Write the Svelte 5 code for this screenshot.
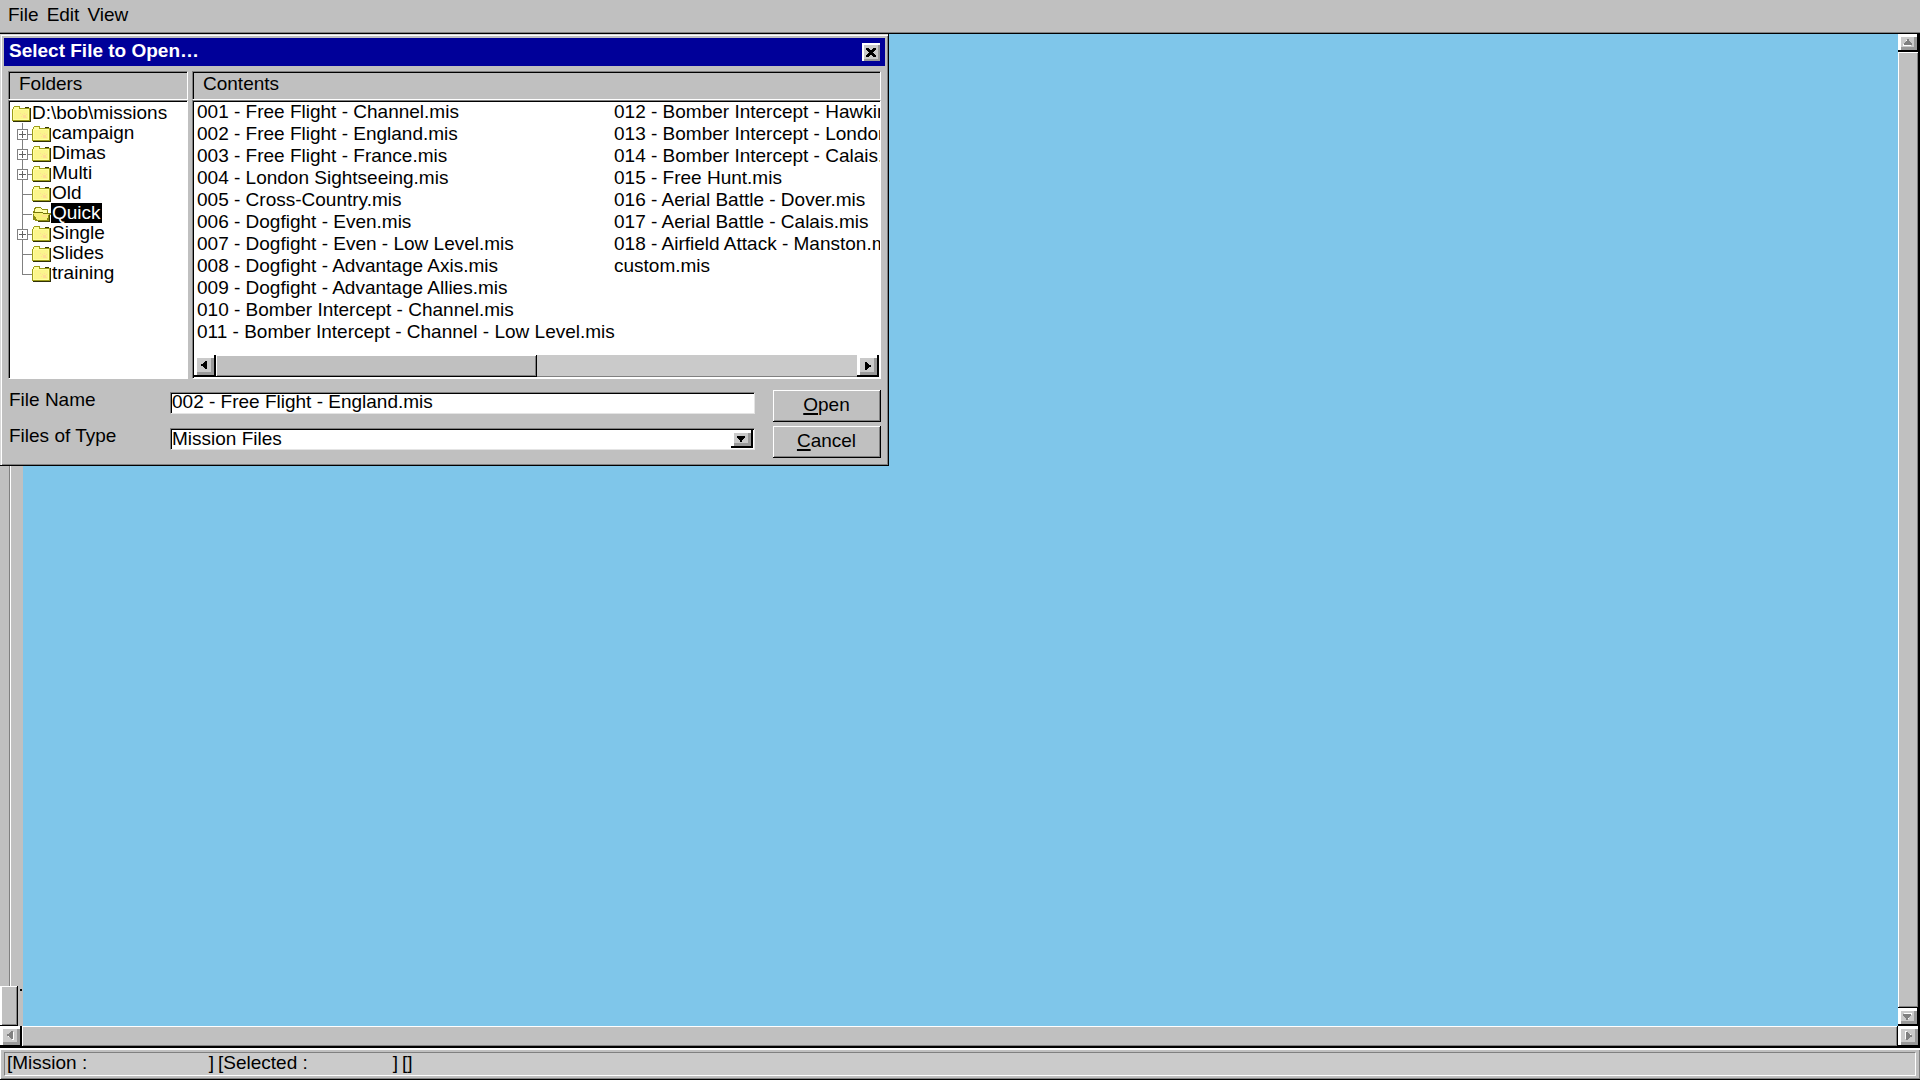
<script lang="ts">
type Folder = {
	name: string;
	expandable?: boolean;
};

const menus = ["File", "Edit", "View"];

const root = "D:\\bob\\missions";

const folders: Folder[] = [
	{ name: "campaign", expandable: true },
	{ name: "Dimas", expandable: true },
	{ name: "Multi", expandable: true },
	{ name: "Old" },
	{ name: "Quick" },
	{ name: "Single", expandable: true },
	{ name: "Slides" },
	{ name: "training" },
];

const files = [
	"001 - Free Flight - Channel.mis",
	"002 - Free Flight - England.mis",
	"003 - Free Flight - France.mis",
	"004 - London Sightseeing.mis",
	"005 - Cross-Country.mis",
	"006 - Dogfight - Even.mis",
	"007 - Dogfight - Even - Low Level.mis",
	"008 - Dogfight - Advantage Axis.mis",
	"009 - Dogfight - Advantage Allies.mis",
	"010 - Bomber Intercept - Channel.mis",
	"011 - Bomber Intercept - Channel - Low Level.mis",
	"012 - Bomber Intercept - Hawkinge.mis",
	"013 - Bomber Intercept - London.mis",
	"014 - Bomber Intercept - Calais.mis",
	"015 - Free Hunt.mis",
	"016 - Aerial Battle - Dover.mis",
	"017 - Aerial Battle - Calais.mis",
	"018 - Airfield Attack - Manston.mis",
	"custom.mis",
];

let selectedFolder = $state("Quick");
let fileName = $state(files[1]);
let fileType = $state("Mission Files");
let zoom = $state(0);
let open = $state(true);
</script>

{#snippet arrow(direction: string)}
	<svg class="arrow arrow--{direction}" width="9" height="9" viewBox="0 0 9 9" shape-rendering="crispEdges" aria-hidden="true">
		<path d="M7 0v8H5V7H4V6H3V5H1V3h2V2h1V1h1V0z" fill="currentColor" />
	</svg>
{/snippet}

{#snippet folderIcon(opened: boolean)}
	<svg class="folder" width="19" height="16" viewBox="0 0 19 16" shape-rendering="crispEdges" aria-hidden="true">
		{#if opened}
			<path d="M1 14V5l1-1V2l1-1h5l2 2h6v4h3l-2 8H4z" fill="#8c8c10" />
			<path d="M3 6V3l1-1h4l2 2h5v3H6L4 9z" fill="#ffffa8" />
			<path d="M1 7h10l2 1h4l-2 6H5z" fill="#f6f078" />
			<path d="M1 6h9l2 1h5v1h-5l-2-1H1z" fill="#75750a" />
			<path d="M10 9h5v2h-5z" fill="#ffe08a" />
			<path d="M5 15h12V9h1v7H6z" fill="#44440a" />
		{:else}
			<path d="M0 3l1-1V1l1-1h5l1 1v1h10v13H0z" fill="#9c9c18" />
			<path d="M1 3h1V1h5v2h10v11H1z" fill="#ffffa0" />
			<path d="M2 4h14v9H2z" fill="#fbf58c" />
			<path d="M8 7h1v1H8zM10 8h1v1h-1zM12 7h1v1h-1zM14 8h1v1h-1zM9 10h1v1H9zM11 9h3v3h-3zM14 11h1v1h-1z" fill="#ffdc96" />
			<path d="M8 1h9v1h1v13H1v1h18V2h-1z" fill="#303008" />
		{/if}
	</svg>
{/snippet}

<div class="app">
	<nav class="menubar" aria-label="Main">
		{#each menus as menu}
			<button type="button">{menu}</button>
		{/each}
	</nav>

	<main class="workspace">
		<div class="zoom">
			<input type="range" aria-label="Zoom" min="0" max="10" bind:value={zoom} />
		</div>
		<div class="map"></div>
		<div class="scroll scroll--vertical scroll--disabled">
			<button type="button" aria-label="Scroll up">{@render arrow("up")}</button>
			<div class="thumb"></div>
			<button type="button" aria-label="Scroll down">{@render arrow("down")}</button>
		</div>

		{#if open}
			<div class="dialog" role="dialog" aria-labelledby="dialog-title">
				<header class="titlebar">
					<h1 id="dialog-title">Select File to Open…</h1>
					<button class="close" type="button" aria-label="Close" onclick={() => (open = false)}>
						<svg width="10" height="9" viewBox="0 0 10 9" shape-rendering="crispEdges" aria-hidden="true">
							<path d="M0 0h3v1h1v1h2V1h1V0h3v2H9v1H8v1H7v1h1v1h1v1h1v2H7V8H6V7H4v1H3v1H0V7h1V6h1V5h1V4H2V3H1V2H0z" />
						</svg>
					</button>
				</header>

				<div class="panes">
					<section class="pane">
						<h2>Folders</h2>
						<div class="box tree">
							<div class="node">
								{@render folderIcon(false)}
								<span class="label">{root}</span>
							</div>
							{#each folders as folder, index (folder.name)}
								<button class="node" type="button" onclick={() => (selectedFolder = folder.name)}>
									<svg width="20" height="20" viewBox="0 0 20 20" shape-rendering="crispEdges" aria-hidden="true">
										<path d={index === folders.length - 1 ? "M10 0h1v12h-1z" : "M10 0h1v20h-1z"} fill="#808080" />
										<path d="M10 11h10v1H10z" fill="#808080" />
										{#if folder.expandable}
											<path d="M5 6h11v11H5z" fill="#808080" />
											<path d="M6 7h9v9H6z" fill="#fff" />
											<path d="M7 11h7v1H7zM10 8h1v7h-1z" fill="#606060" />
										{/if}
									</svg>
									{@render folderIcon(folder.name === selectedFolder)}
									<span class="label" class:label--selected={folder.name === selectedFolder}>{folder.name}</span>
								</button>
							{/each}
						</div>
					</section>

					<section class="pane">
						<h2>Contents</h2>
						<div class="box contents">
							<ul>
								{#each files as file (file)}
									<li><button type="button" onclick={() => (fileName = file)}>{file}</button></li>
								{/each}
							</ul>
							<div class="scroll scroll--list">
								<button type="button" aria-label="Scroll left">{@render arrow("left")}</button>
								<div class="track"><div class="thumb"></div></div>
								<button type="button" aria-label="Scroll right">{@render arrow("right")}</button>
							</div>
						</div>
					</section>
				</div>

				<form class="fields" onsubmit={(event) => event.preventDefault()}>
					<label for="file-name">File Name</label>
					<input id="file-name" type="text" bind:value={fileName} />
					<button class="action" type="submit"><u>O</u>pen</button>

					<label for="file-type">Files of Type</label>
					<div class="combo">
						<select id="file-type" bind:value={fileType}>
							<option>Mission Files</option>
						</select>
						<span class="combo-arrow">{@render arrow("down")}</span>
					</div>
					<button class="action" type="button" onclick={() => (open = false)}><u>C</u>ancel</button>
				</form>
			</div>
		{/if}
	</main>

	<div class="scroll scroll--disabled scroll--page">
		<button type="button" aria-label="Scroll left">{@render arrow("left")}</button>
		<div class="thumb"></div>
		<button type="button" aria-label="Scroll right">{@render arrow("right")}</button>
	</div>

	<footer class="status">
		<div class="status-line">
			<span class="status-item status-item--mission"><span>[Mission :</span><span>]</span></span>
			<span class="status-item status-item--selected"><span>[Selected :</span><span>]</span></span>
			<span>[]</span>
		</div>
	</footer>
</div>

<style>
	:global(body) {
		background: #c0c0c0;
	}

	.app {
		--face: #c0c0c0;
		--shade: #808080;
		display: flex;
		flex-direction: column;
		min-height: 100vh;
		background: var(--face);
		color: #000;
		font: 19px/20px "Liberation Sans", Arial, sans-serif;
	}

	.app :global(*) {
		box-sizing: border-box;
	}

	button,
	input,
	select {
		margin: 0;
		padding: 0;
		border: 0;
		border-radius: 0;
		background: none;
		color: inherit;
		font: inherit;
	}

	svg {
		display: block;
		flex: none;
	}

	.menubar {
		display: flex;
		gap: 8px;
		height: 34px;
		padding: 4px 8px 8px;
		border-bottom: 1px solid #000;
		box-shadow: inset 0 -1px var(--shade);
	}

	.workspace {
		position: relative;
		display: flex;
		flex: 1;
	}

	.map {
		flex: 1;
		background: #7fc6ea;
	}

	.zoom {
		display: flex;
		width: 23px;
	}

	.zoom::after {
		align-self: flex-end;
		width: 2px;
		height: 2px;
		margin: 0 0 35px 2px;
		background: #000;
		content: "";
	}

	.zoom input {
		width: 18px;
		background: linear-gradient(to right, transparent 9px, var(--shade) 9px 10px, #fff 10px 11px, transparent 11px);
		appearance: none;
		direction: rtl;
		writing-mode: vertical-lr;
	}

	.zoom input::-webkit-slider-thumb {
		width: 18px;
		height: 40px;
		border: 1px solid #000;
		border-width: 0 1px 1px 0;
		border-radius: 0;
		background: var(--face);
		box-shadow: inset 2px 1px #fff, inset -1px -1px var(--shade);
		appearance: none;
	}

	.arrow--right {
		transform: rotate(180deg);
	}

	.arrow--up {
		transform: rotate(90deg);
	}

	.arrow--down {
		transform: rotate(-90deg);
	}

	.scroll {
		display: flex;
	}

	.scroll button,
	.combo-arrow {
		display: flex;
		flex: none;
		align-items: center;
		justify-content: center;
		border: solid #000;
		border-width: 0 2px 2px 0;
		background: #cacaca;
		box-shadow: inset 3px 3px #fff, inset -3px -3px #999;
	}

	.scroll .thumb {
		border: solid #000;
		border-width: 0 1px 1px 0;
		background: var(--face);
		box-shadow: inset 1px 1px #fff, inset -1px -1px var(--shade);
	}

	.scroll--disabled button {
		color: var(--shade);
	}

	.scroll--disabled .arrow {
		filter: drop-shadow(1px 1px #fff);
	}

	.scroll--disabled .thumb {
		flex: 1;
	}

	.scroll--vertical {
		flex-direction: column;
		width: 22px;
		border-right: 1px solid #000;
	}

	.scroll--vertical button {
		height: 18px;
	}

	.scroll--page {
		height: 22px;
		border-bottom: 1px solid #000;
	}

	.scroll--page button {
		width: 22px;
	}

	.status {
		padding: 4px 4px 3px;
		border-bottom: 1px solid #000;
		background: var(--face);
		box-shadow: inset 1px 2px #fff, inset -1px -1px var(--shade);
	}

	.status-line {
		display: flex;
		gap: 4px;
		height: 24px;
		padding-left: 2px;
		border: 1px solid #fff;
		border-top-color: var(--shade);
		border-left-color: var(--shade);
		background: #cbcbcb;
	}

	.status-item {
		display: flex;
		justify-content: space-between;
	}

	.status-item--mission {
		width: 207px;
	}

	.status-item--selected {
		width: 180px;
	}

	.dialog {
		position: absolute;
		top: 0;
		left: 0;
		width: min(889px, 100%);
		padding: 4px 3px 7px 4px;
		border: solid #000;
		border-width: 0 1px 1px 0;
		background: var(--face);
		box-shadow: inset 1px 1px #d8d8d8, inset 2px 2px #fff, inset -1px -1px var(--shade);
	}

	.titlebar {
		display: flex;
		align-items: center;
		justify-content: space-between;
		height: 28px;
		padding: 0 5px;
		background: #000099;
		color: #fff;
	}

	h1 {
		margin: 0 0 2px;
		font-size: 19px;
		line-height: 20px;
	}

	.close {
		display: flex;
		align-items: center;
		justify-content: center;
		width: 18px;
		height: 18px;
		background: #cacaca;
		box-shadow: inset 2px 2px #fff, inset -2px -2px #999;
		color: #000;
	}

	.panes {
		display: grid;
		grid-template-columns: 180px minmax(0, 1fr);
		gap: 4px;
		margin: 5px 4px 0;
	}

	.pane {
		display: flex;
		flex-direction: column;
		min-width: 0;
	}

	h2 {
		height: 29px;
		margin: 0;
		padding: 2px 10px;
		border: 1px solid #fff;
		border-top-color: var(--shade);
		border-left-color: var(--shade);
		box-shadow: inset 1px 1px #000;
		font-size: 19px;
		font-weight: 400;
		line-height: 20px;
	}

	.box {
		flex: 1;
		padding: 1px 0 0 1px;
		border: 1px solid #fff;
		border-top-color: var(--shade);
		border-left-color: var(--shade);
		background: #fff;
		box-shadow: inset 1px 1px #000;
	}

	.box.tree {
		padding: 2px 0 0 3px;
	}

	.node {
		display: flex;
		align-items: flex-end;
		width: 100%;
		height: 20px;
		text-align: left;
	}

	.folder {
		margin-bottom: 1px;
	}

	.label {
		padding: 0 1px;
	}

	.label--selected {
		background: #000;
		color: #fff;
	}

	ul {
		display: grid;
		grid-template-rows: repeat(11, 22px);
		grid-auto-columns: 417px;
		grid-auto-flow: column;
		height: 253px;
		margin: 0;
		padding: 0 0 0 3px;
		overflow: hidden;
		list-style: none;
	}

	li button {
		display: block;
		white-space: nowrap;
	}

	.scroll--list {
		height: 22px;
		margin: 0 1px 1px 0;
	}

	.scroll--list button {
		width: 22px;
	}

	.scroll--list .track {
		flex: 1;
		border-bottom: 1px solid var(--shade);
		background: #cacaca;
	}

	.scroll--list .thumb {
		width: 50%;
		height: 22px;
	}

	.fields {
		display: grid;
		grid-template-columns: 143px minmax(0, 1fr) 108px;
		row-gap: 4px;
		column-gap: 18px;
		align-items: start;
		margin: 11px 4px 0 5px;
	}

	.fields input,
	.combo {
		width: 100%;
		height: 22px;
		margin-top: 2px;
		border: 1px solid #e4e4e4;
		border-top-color: var(--shade);
		border-left-color: var(--shade);
		background: #fff;
		box-shadow: inset 1px 1px #000;
	}

	.fields input {
		padding: 0 1px 2px;
	}

	.combo {
		position: relative;
		display: flex;
	}

	.combo select {
		flex: 1;
		padding: 0 1px 2px;
		appearance: none;
	}

	.combo-arrow {
		position: absolute;
		top: 1px;
		right: 1px;
		bottom: 1px;
		width: 22px;
		pointer-events: none;
	}

	.action {
		height: 32px;
		padding-bottom: 1px;
		border: solid #000;
		border-width: 0 1px 1px 0;
		background: var(--face);
		box-shadow: inset 1px 1px #fff, inset -1px -1px var(--shade);
	}

	.action u {
		text-decoration-thickness: 2px;
		text-underline-offset: 2px;
	}
</style>
